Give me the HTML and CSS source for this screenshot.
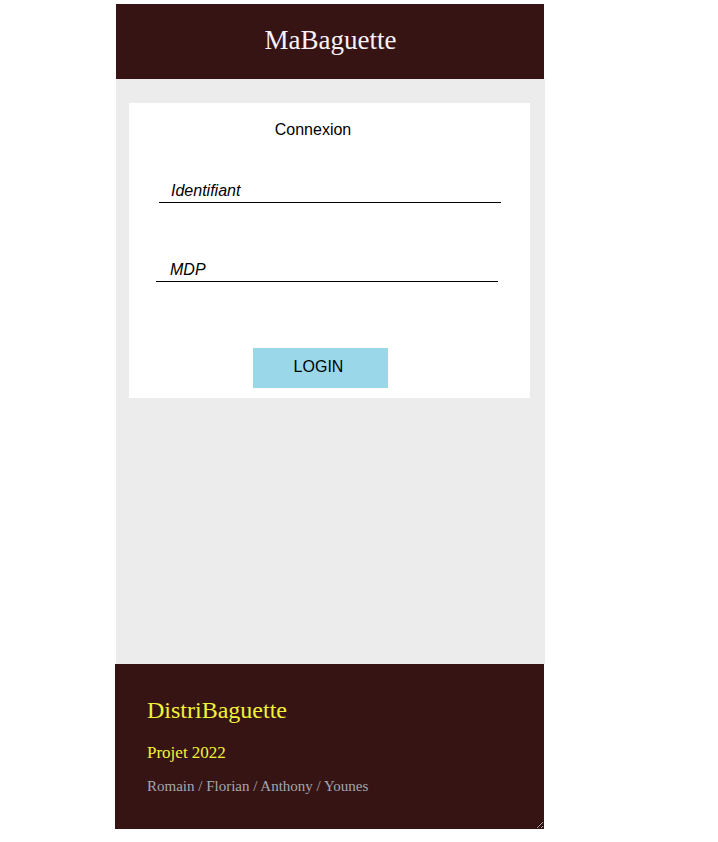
FILE: index.html
```html
<!DOCTYPE html>
<html lang="fr">
<head>
<meta charset="utf-8">
<title>MaBaguette</title>
<link rel="stylesheet" href="styles.css">
</head>
<body>
<div class="page">
  <header class="topbar">
    <h1 class="brand">MaBaguette</h1>
  </header>
  <main class="content">
    <form class="card">
      <div class="card-title">Connexion</div>
      <input class="field field-id" type="text" placeholder="Identifiant">
      <input class="field field-pw" type="password" placeholder="MDP">
      <button class="login" type="button">LOGIN</button>
    </form>
  </main>
  <footer class="footer">
    <div class="footer-title">DistriBaguette</div>
    <div class="footer-sub">Projet 2022</div>
    <div class="footer-names">Romain / Florian / Anthony / Younes</div>
  </footer>
</div>
</body>
</html>
```
FILE: styles.css
```css
html, body {
  margin: 0;
  padding: 0;
  background: #ffffff;
}

.page {
  width: 428px;
  margin: 4px 0 0 116px;
  display: flex;
  flex-direction: column;
}

.topbar {
  height: 75px;
  background: #361414;
  display: flex;
  align-items: center;
  justify-content: center;
}

.brand {
  margin: 0;
  padding: 0 0 4px 1px;
  font-family: "Liberation Serif", "Times New Roman", serif;
  font-weight: normal;
  font-size: 27px;
  line-height: 30px;
  color: #f6f2f8;
}

.content {
  height: 585px;
  box-sizing: border-box;
  background: #ececec;
  padding: 24px 14px 0 13px;
  width: 429px;
}

.card {
  background: #ffffff;
  width: 401px;
  box-sizing: border-box;
  padding: 18px 0 10px 0;
  display: flex;
  flex-direction: column;
  align-items: flex-start;
}

.card-title {
  align-self: stretch;
  text-align: center;
  padding-right: 33px;
  font-family: "Liberation Sans", Arial, sans-serif;
  font-size: 16px;
  line-height: 18px;
  color: #000;
}

.field {
  box-sizing: border-box;
  width: 342px;
  height: 21px;
  border: none;
  border-bottom: 1px solid #000;
  background: transparent;
  padding: 0 0 2px 12px;
  font-family: "Liberation Sans", Arial, sans-serif;
  font-size: 16px;
  font-style: italic;
  color: #000;
  outline: none;
}

.field::placeholder {
  color: #000;
  font-style: italic;
  opacity: 1;
}

.field-id {
  margin: 43px 0 0 30px;
}

.field-pw {
  margin: 58px 0 0 27px;
  padding-left: 14px;
}

.login {
  margin: 66px 0 0 124px;
  width: 135px;
  height: 40px;
  border: none;
  background: #9ad8e9;
  font-family: "Liberation Sans", Arial, sans-serif;
  font-size: 16px;
  color: #000;
  padding: 0 4px 2px 0;
}

.footer {
  height: 165px;
  box-sizing: border-box;
  margin-left: -1px;
  background: #361414;
  padding: 32px 0 0 32px;
  resize: both;
  overflow: auto;
  font-family: "Liberation Serif", "Times New Roman", serif;
}

.footer-title {
  font-size: 24px;
  line-height: 28px;
  color: #f4f236;
}

.footer-sub {
  margin-top: 19px;
  font-size: 17px;
  line-height: 20px;
  color: #f4f236;
}

.footer-names {
  margin-top: 14px;
  font-size: 15px;
  line-height: 18px;
  color: #a3a7ae;
}
```
